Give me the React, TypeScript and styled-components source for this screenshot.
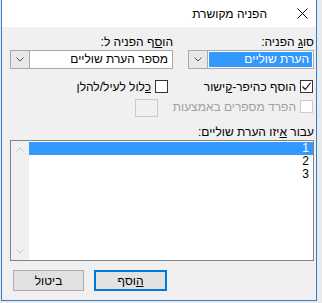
import styled, { createGlobalStyle } from "styled-components";

const GlobalStyle = createGlobalStyle`
  html, body {
    margin: 0;
    padding: 0;
    background: #e9e9e9;
  }
  body {
    font-family: "Liberation Sans", "DejaVu Sans", Arial, sans-serif;
    font-size: 12px;
    color: #000;
  }
`;

const Window = styled.div`
  width: 316px;
  height: 301px;
  margin-left: 1px;
  box-sizing: border-box;
  border: 1px solid #2b7fd3;
  border-top: 0;
  background: #f0f0f0;
  display: flex;
  flex-direction: column;
  direction: rtl;
`;

const TitleBar = styled.div`
  height: 27px;
  flex-shrink: 0;
  background: #fff;
  display: flex;
  align-items: center;
`;

const CloseButton = styled.div`
  width: 28px;
  height: 27px;
  display: flex;
  align-items: center;
  justify-content: center;
`;

const Title = styled.div`
  margin-right: 21px;
  line-height: 14px;
`;

const Body = styled.div`
  flex: 1;
  padding: 8px 2px 0 8px;
  display: flex;
  flex-direction: column;
`;

const TwoCols = styled.div<{ $top?: number }>`
  display: grid;
  grid-template-columns: 126px 163px;
  column-gap: 15px;
  margin-top: ${({ $top }) => $top ?? 0}px;
`;

const Field = styled.div`
  display: flex;
  flex-direction: column;
`;

const Label = styled.div<{ $top?: number }>`
  line-height: 14px;
  height: 14px;
  margin-bottom: 1px;
  margin-top: ${({ $top }) => $top ?? 0}px;
  white-space: nowrap;
`;

const Key = styled.span`
  text-decoration: underline;
`;

const Combo = styled.div`
  height: 19px;
  box-sizing: border-box;
  display: flex;
  border: 1px solid #a9a9a9;
  background: #fff;
`;

const ComboText = styled.div<{ $active?: boolean }>`
  flex: 1;
  margin: 1px;
  padding: 0 3px;
  line-height: 15px;
  white-space: nowrap;
  overflow: hidden;
  background: ${({ $active }) => ($active ? "#3399ff" : "transparent")};
  color: ${({ $active }) => ($active ? "#fff" : "#000")};
`;

const ComboArrow = styled.div`
  width: 18px;
  border-inline-start: 1px solid #a9a9a9;
  background: #e8e8e8;
  display: flex;
  align-items: center;
  justify-content: center;
`;

const CheckRow = styled.div<{ $indent?: number; $top?: number }>`
  display: flex;
  align-items: center;
  gap: 4px;
  height: 13px;
  padding-right: ${({ $indent }) => $indent ?? 0}px;
  margin-top: ${({ $top }) => $top ?? 0}px;
  white-space: nowrap;
`;

const Box = styled.span<{ $disabled?: boolean }>`
  width: 13px;
  height: 13px;
  box-sizing: border-box;
  flex-shrink: 0;
  border: 1px solid ${({ $disabled }) => ($disabled ? "#cccccc" : "#333333")};
  background: #fff;
  display: flex;
  align-items: center;
  justify-content: center;
`;

const Dim = styled.span`
  color: #a0a0a0;
`;

const SmallInput = styled.span`
  width: 23px;
  height: 18px;
  box-sizing: border-box;
  margin-right: 11px;
  margin-top: 2px;
  border: 1px solid #c2cbd8;
  background: #f0f0f0;
`;

const List = styled.div`
  height: 121px;
  box-sizing: border-box;
  border: 1px solid #838383;
  background: #fff;
  display: flex;
`;

const Items = styled.div`
  flex: 1;
  padding-top: 1px;
`;

const Item = styled.div<{ $selected?: boolean }>`
  height: 13px;
  line-height: 13px;
  padding-right: 4px;
  background: ${({ $selected }) => ($selected ? "#3399ff" : "transparent")};
  color: ${({ $selected }) => ($selected ? "#fff" : "#000")};
`;

const ScrollBar = styled.div`
  width: 18px;
  background: #f0f0f0;
  display: flex;
  flex-direction: column;
  justify-content: space-between;
  align-items: center;
  padding: 6px 0;
  box-sizing: border-box;
`;

const Buttons = styled.div`
  display: flex;
  justify-content: flex-end;
  gap: 10px;
  margin-top: 9px;
  padding-left: 3px;
`;

const Button = styled.div<{ $default?: boolean; $w: number }>`
  width: ${({ $w }) => $w}px;
  height: 21px;
  box-sizing: border-box;
  background: #e1e1e1;
  border: ${({ $default }) => ($default ? "2px solid #0078d7" : "1px solid #adadad")};
  display: flex;
  align-items: center;
  justify-content: center;
`;

const Chevron = ({ up, color }: { up?: boolean; color: string }) => (
  <svg width="8" height="5" viewBox="0 0 8 5">
    <polyline
      points={up ? "0.5,4.5 4,1 7.5,4.5" : "0.5,0.5 4,4 7.5,0.5"}
      fill="none"
      stroke={color}
      strokeWidth="1"
    />
  </svg>
);

const App = () => {
  return (
    <>
      <GlobalStyle />
      <Window>
        <TitleBar>
          <CloseButton>
            <svg width="11" height="11" viewBox="0 0 11 11">
              <path d="M0.5 0.5 L10.5 10.5 M10.5 0.5 L0.5 10.5" stroke="#000" strokeWidth="1" />
            </svg>
          </CloseButton>
          <Title>הפניה מקושרת</Title>
        </TitleBar>
        <Body>
          <TwoCols>
            <Field>
              <Label>
                סו<Key>ג</Key> הפניה:
              </Label>
              <Combo>
                <ComboText $active>הערת שוליים</ComboText>
                <ComboArrow>
                  <Chevron color="#555" />
                </ComboArrow>
              </Combo>
            </Field>
            <Field>
              <Label>
                הו<Key>ס</Key>ף הפניה ל:
              </Label>
              <Combo>
                <ComboText>מספר הערת שוליים</ComboText>
                <ComboArrow>
                  <Chevron color="#555" />
                </ComboArrow>
              </Combo>
            </Field>
          </TwoCols>
          <TwoCols $top={11}>
            <CheckRow $indent={1}>
              <Box>
                <svg width="11" height="11" viewBox="0 0 11 11">
                  <polyline points="1.5,5.5 4.2,8.5 9.5,1.8" fill="none" stroke="#222" strokeWidth="1.2" />
                </svg>
              </Box>
              <span>
                הוסף כהיפר-<Key>ק</Key>ישור
              </span>
            </CheckRow>
            <CheckRow $indent={5}>
              <Box />
              <span>
                <Key>כ</Key>לול לעיל/להלן
              </span>
            </CheckRow>
          </TwoCols>
          <CheckRow $indent={1} $top={7}>
            <Box $disabled />
            <Dim>הפרד מספרים באמצעות</Dim>
            <SmallInput />
          </CheckRow>
          <Label $top={12}>
            עבור <Key>א</Key>יזו הערת שוליים:
          </Label>
          <List>
            <Items>
              <Item $selected>1</Item>
              <Item>2</Item>
              <Item>3</Item>
            </Items>
            <ScrollBar>
              <Chevron up color="#c4c4c4" />
              <Chevron color="#c4c4c4" />
            </ScrollBar>
          </List>
          <Buttons>
            <Button $default $w={73}>
              <span>
                <Key>ה</Key>וסף
              </span>
            </Button>
            <Button $w={71}>ביטול</Button>
          </Buttons>
        </Body>
      </Window>
    </>
  );
};

export default App;
